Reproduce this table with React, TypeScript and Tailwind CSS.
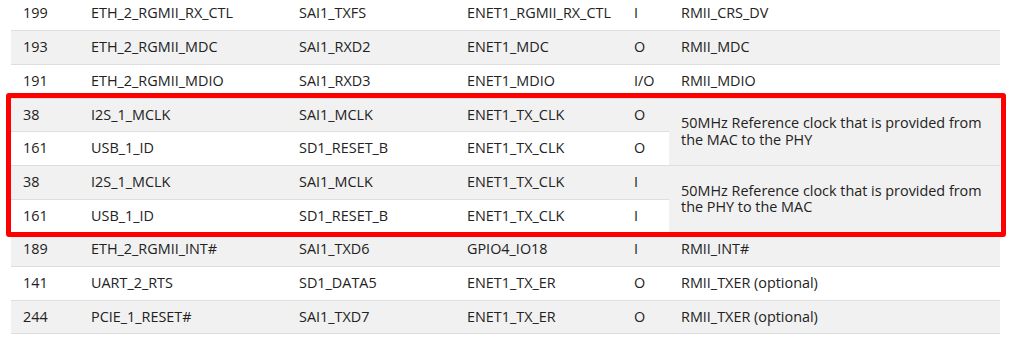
const rows = [
  { pin: "199", name: "ETH_2_RGMII_RX_CTL", alt: "SAI1_TXFS", fn: "ENET1_RGMII_RX_CTL", dir: "I", desc: "RMII_CRS_DV" },
  { pin: "193", name: "ETH_2_RGMII_MDC", alt: "SAI1_RXD2", fn: "ENET1_MDC", dir: "O", desc: "RMII_MDC" },
  { pin: "191", name: "ETH_2_RGMII_MDIO", alt: "SAI1_RXD3", fn: "ENET1_MDIO", dir: "I/O", desc: "RMII_MDIO" },
  { pin: "38", name: "I2S_1_MCLK", alt: "SAI1_MCLK", fn: "ENET1_TX_CLK", dir: "O", desc: "50MHz Reference clock that is provided from the MAC to the PHY", span: 2 },
  { pin: "161", name: "USB_1_ID", alt: "SD1_RESET_B", fn: "ENET1_TX_CLK", dir: "O", span: 0 },
  { pin: "38", name: "I2S_1_MCLK", alt: "SAI1_MCLK", fn: "ENET1_TX_CLK", dir: "I", desc: "50MHz Reference clock that is provided from the PHY to the MAC", span: 2 },
  { pin: "161", name: "USB_1_ID", alt: "SD1_RESET_B", fn: "ENET1_TX_CLK", dir: "I", span: 0 },
  { pin: "189", name: "ETH_2_RGMII_INT#", alt: "SAI1_TXD6", fn: "GPIO4_IO18", dir: "I", desc: "RMII_INT#" },
  { pin: "141", name: "UART_2_RTS", alt: "SD1_DATA5", fn: "ENET1_TX_ER", dir: "O", desc: "RMII_TXER (optional)" },
  { pin: "244", name: "PCIE_1_RESET#", alt: "SAI1_TXD7", fn: "ENET1_TX_ER", dir: "O", desc: "RMII_TXER (optional)" },
];

const cell = "h-[33.7px] border-b border-[#dedede] px-3 align-middle";

export default function App() {
  return (
    <div className="relative h-[349px] w-[1015px] overflow-hidden bg-white font-['Open_Sans','Liberation_Sans',sans-serif] text-[14.4px] leading-[16.5px] text-[#222]">
      <table className="-mt-[3px] ml-[11px] w-[989px] table-fixed border-collapse">
        <colgroup>
          <col className="w-[68px]" />
          <col className="w-[208px]" />
          <col className="w-[168px]" />
          <col className="w-[167px]" />
          <col className="w-[47px]" />
          <col />
        </colgroup>
        <tbody>
          {rows.map((r, i) => (
            <tr key={i} className={i % 2 === 1 ? "bg-[#f1f1f1]" : "bg-white"}>
              <td className={cell}>{r.pin}</td>
              <td className={cell}>{r.name}</td>
              <td className={cell}>{r.alt}</td>
              <td className={cell}>{r.fn}</td>
              <td className={cell}>{r.dir}</td>
              {r.span === 0 ? null : (
                <td rowSpan={r.span ?? 1} className={`${cell} ${r.span || i % 2 === 1 ? "bg-[#f1f1f1]" : "bg-white"}`}>
                  {r.desc}
                </td>
              )}
            </tr>
          ))}
        </tbody>
      </table>

      {/* red highlight around the clock rows */}
      <div className="pointer-events-none absolute left-[6px] top-[93px] h-[144px] w-[1000px] rounded-[3px] border-[5px] border-[#ff0000]" />
    </div>
  );
}
